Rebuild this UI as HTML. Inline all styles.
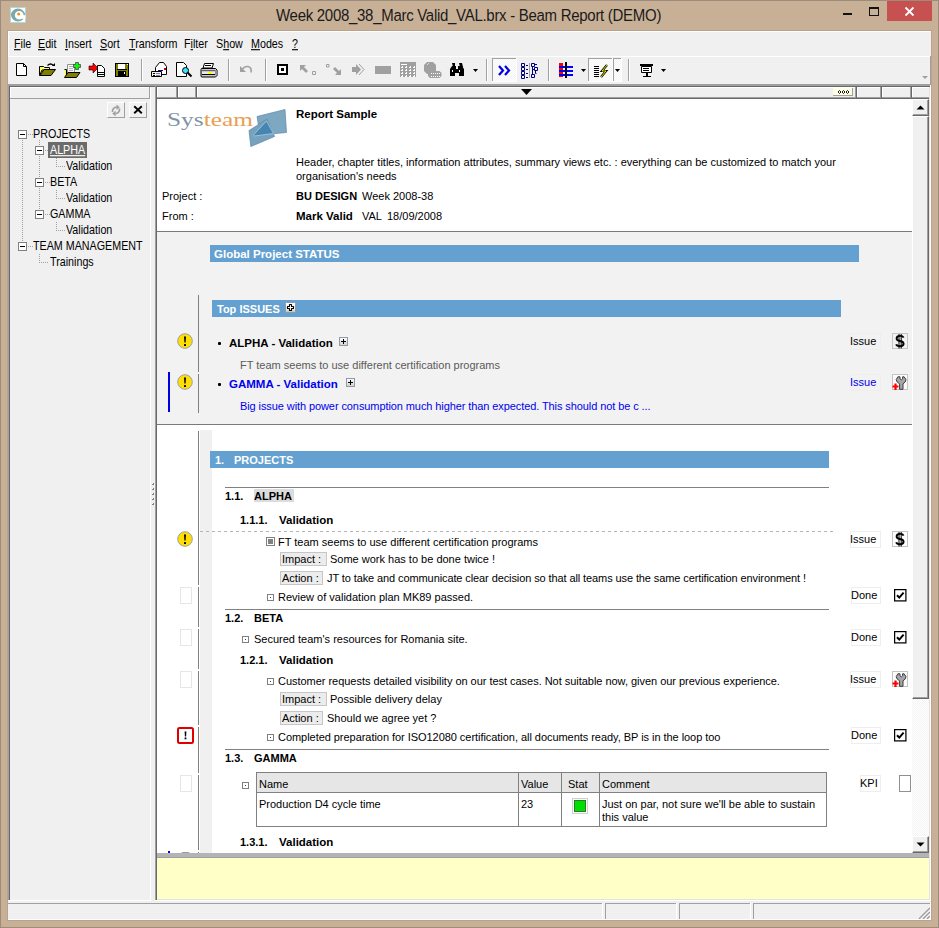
<!DOCTYPE html>
<html><head><meta charset="utf-8">
<style>
*{box-sizing:border-box}
html,body{margin:0;padding:0}
body{width:939px;height:928px;position:relative;overflow:hidden;background:#c8b097;font-family:"Liberation Sans",sans-serif;font-size:11px;color:#000}
.a{position:absolute}
.t{position:absolute;white-space:nowrap;font-size:11px;line-height:11px}
.b{font-weight:bold}
.ms{transform:scale(0.975,1.125);transform-origin:0 9px}
u{text-decoration:underline;text-underline-offset:1px;text-decoration-thickness:1px}
</style></head><body>
<!-- window frame -->
<div class="a" style="left:0;top:0;width:939px;height:1px;background:#9d8c7b"></div>
<div class="a" style="left:0;top:0;width:1px;height:928px;background:#9d8c7b"></div>
<div class="a" style="left:938px;top:0;width:1px;height:928px;background:#9d8c7b"></div>
<div class="a" style="left:0;top:927px;width:939px;height:1px;background:#9d8c7b"></div>

<!-- title -->
<svg id="ticon" class="a" style="left:10px;top:7px" width="16" height="16"><rect x="0.5" y="0.5" width="15" height="15" fill="#fff" stroke="#b8d4d4"/><path fill-rule="evenodd" d="M15 8A7 6.4 0 1 0 1 8A7 6.4 0 1 0 15 8ZM13.6 8.3A4.4 4.2 0 1 0 4.8 8.3A4.4 4.2 0 1 0 13.6 8.3Z" fill="#79a9a9"/><path d="M10.5 8.2H15.5V11.8H10.5Z" fill="#fff"/><circle cx="8.6" cy="7" r="1.5" fill="#f5901e"/></svg>
<div class="t" style="left:276px;top:8px;font-size:15px;line-height:15px;letter-spacing:-0.29px;color:#1a1a1a;transform:scaleY(1.05);transform-origin:0 13px">Week 2008_38_Marc Valid_VAL.brx - Beam Report (DEMO)</div>
<div class="a" style="left:843px;top:13px;width:9px;height:2px;background:#111"></div>
<div class="a" style="left:869px;top:7px;width:10px;height:9px;border:1px solid #111;border-top-width:2px"></div>
<div class="a" style="left:887px;top:1px;width:45px;height:20px;background:#c75050"></div>
<svg class="a" style="left:887px;top:1px" width="45" height="20"><path d="M18.5 6.5l8 8M26.5 6.5l-8 8" stroke="#fff" stroke-width="1.8"/></svg>

<!-- client area -->
<div class="a" style="left:7px;top:30px;width:925px;height:891px;background:#b9a38c"></div>
<div class="a" style="left:8px;top:31px;width:923px;height:889px;background:#f0f0f0"></div>
<div class="a" style="left:8px;top:31px;width:923px;height:1px;background:#fff"></div>
<div class="a" style="left:8px;top:31px;width:1px;height:25px;background:#fff"></div>
<div class="a" style="left:8px;top:56px;width:923px;height:1px;background:#fff"></div>

<!-- menu -->
<div id="menu">
<div class="t ms" style="left:14px;top:39px"><u>F</u>ile</div>
<div class="t ms" style="left:38px;top:39px"><u>E</u>dit</div>
<div class="t ms" style="left:65px;top:39px"><u>I</u>nsert</div>
<div class="t ms" style="left:100px;top:39px"><u>S</u>ort</div>
<div class="t ms" style="left:129px;top:39px"><u>T</u>ransform</div>
<div class="t ms" style="left:184px;top:39px">F<u>i</u>lter</div>
<div class="t ms" style="left:216px;top:39px">S<u>h</u>ow</div>
<div class="t ms" style="left:251px;top:39px"><u>M</u>odes</div>
<div class="t ms" style="left:292px;top:39px"><u>?</u></div>
</div>

<!-- toolbar -->
<div id="toolbar"></div>

<!-- panes -->
<div id="panes">
<div class="a" style="left:930px;top:56px;width:1px;height:29px;background:#a0a0a0;"></div>
<div class="a" style="left:8px;top:84px;width:923px;height:2px;background:#a0a0a0;"></div>
<div class="a" style="left:9px;top:86px;width:921px;height:1px;background:#696969;"></div>
<div class="a" style="left:8px;top:84px;width:1px;height:817px;background:#a0a0a0;"></div>
<div class="a" style="left:9px;top:86px;width:1px;height:814px;background:#696969;"></div>
<div class="a" style="left:150px;top:87px;width:1px;height:814px;background:#ffffff;"></div>
<div class="a" style="left:8px;top:900px;width:143px;height:1px;background:#ffffff;"></div>
<div class="a" style="left:10px;top:87px;width:140px;height:1px;background:#ffffff;"></div>
<div class="a" style="left:10px;top:87px;width:1px;height:11px;background:#ffffff;"></div>
<div class="a" style="left:149px;top:87px;width:1px;height:12px;background:#a0a0a0;"></div>
<div class="a" style="left:10px;top:98px;width:140px;height:1px;background:#a0a0a0;"></div>
<div class="a" style="left:155px;top:84px;width:1px;height:817px;background:#a0a0a0;"></div>
<div class="a" style="left:156px;top:86px;width:1px;height:814px;background:#696969;"></div>
<div class="a" style="left:930px;top:85px;width:1px;height:816px;background:#ffffff;"></div>
<div class="a" style="left:155px;top:900px;width:776px;height:1px;background:#ffffff;"></div>
<div class="a" style="left:157px;top:899px;width:773px;height:1px;background:#e3e3e3;"></div>
<div class="a" style="left:929px;top:87px;width:1px;height:813px;background:#e3e3e3;"></div>
<div class="a" style="left:157px;top:87px;width:21px;height:12px;background:#f0f0f0;"></div>
<div class="a" style="left:157px;top:87px;width:21px;height:1px;background:#ffffff;"></div>
<div class="a" style="left:157px;top:87px;width:1px;height:10px;background:#ffffff;"></div>
<div class="a" style="left:157px;top:97px;width:21px;height:1px;background:#a0a0a0;"></div>
<div class="a" style="left:157px;top:98px;width:21px;height:1px;background:#696969;"></div>
<div class="a" style="left:176px;top:87px;width:1px;height:11px;background:#a0a0a0;"></div>
<div class="a" style="left:177px;top:87px;width:1px;height:12px;background:#696969;"></div>
<div class="a" style="left:178px;top:87px;width:19px;height:12px;background:#f0f0f0;"></div>
<div class="a" style="left:178px;top:87px;width:19px;height:1px;background:#ffffff;"></div>
<div class="a" style="left:178px;top:87px;width:1px;height:10px;background:#ffffff;"></div>
<div class="a" style="left:178px;top:97px;width:19px;height:1px;background:#a0a0a0;"></div>
<div class="a" style="left:178px;top:98px;width:19px;height:1px;background:#696969;"></div>
<div class="a" style="left:195px;top:87px;width:1px;height:11px;background:#a0a0a0;"></div>
<div class="a" style="left:196px;top:87px;width:1px;height:12px;background:#696969;"></div>
<div class="a" style="left:197px;top:87px;width:660px;height:12px;background:#f0f0f0;"></div>
<div class="a" style="left:197px;top:87px;width:660px;height:1px;background:#ffffff;"></div>
<div class="a" style="left:197px;top:87px;width:1px;height:10px;background:#ffffff;"></div>
<div class="a" style="left:197px;top:97px;width:660px;height:1px;background:#a0a0a0;"></div>
<div class="a" style="left:197px;top:98px;width:660px;height:1px;background:#696969;"></div>
<div class="a" style="left:855px;top:87px;width:1px;height:11px;background:#a0a0a0;"></div>
<div class="a" style="left:856px;top:87px;width:1px;height:12px;background:#696969;"></div>
<div class="a" style="left:857px;top:87px;width:25px;height:12px;background:#f0f0f0;"></div>
<div class="a" style="left:857px;top:87px;width:25px;height:1px;background:#ffffff;"></div>
<div class="a" style="left:857px;top:87px;width:1px;height:10px;background:#ffffff;"></div>
<div class="a" style="left:857px;top:97px;width:25px;height:1px;background:#a0a0a0;"></div>
<div class="a" style="left:857px;top:98px;width:25px;height:1px;background:#696969;"></div>
<div class="a" style="left:880px;top:87px;width:1px;height:11px;background:#a0a0a0;"></div>
<div class="a" style="left:881px;top:87px;width:1px;height:12px;background:#696969;"></div>
<div class="a" style="left:882px;top:87px;width:30px;height:12px;background:#f0f0f0;"></div>
<div class="a" style="left:882px;top:87px;width:30px;height:1px;background:#ffffff;"></div>
<div class="a" style="left:882px;top:87px;width:1px;height:10px;background:#ffffff;"></div>
<div class="a" style="left:882px;top:97px;width:30px;height:1px;background:#a0a0a0;"></div>
<div class="a" style="left:882px;top:98px;width:30px;height:1px;background:#696969;"></div>
<div class="a" style="left:910px;top:87px;width:1px;height:11px;background:#a0a0a0;"></div>
<div class="a" style="left:911px;top:87px;width:1px;height:12px;background:#696969;"></div>
<div class="a" style="left:912px;top:87px;width:17px;height:12px;background:#f0f0f0;"></div>
<div class="a" style="left:912px;top:87px;width:17px;height:1px;background:#ffffff;"></div>
<div class="a" style="left:912px;top:87px;width:1px;height:10px;background:#ffffff;"></div>
<div class="a" style="left:912px;top:97px;width:17px;height:1px;background:#a0a0a0;"></div>
<div class="a" style="left:912px;top:98px;width:17px;height:1px;background:#696969;"></div>
<div class="a" style="left:157px;top:99px;width:755px;height:754px;background:#ffffff;"></div>
<div class="a" style="left:912px;top:99px;width:17px;height:754px;background:#f0f0f0;"></div>
<div class="a" style="left:157px;top:853px;width:772px;height:5px;background:#b4b4b4;"></div>
<div class="a" style="left:157px;top:858px;width:772px;height:41px;background:#ffffc8;"></div>
<div class="a" style="left:8px;top:903px;width:595px;height:1px;background:#a0a0a0;"></div>
<div class="a" style="left:602px;top:903px;width:1px;height:16px;background:#ffffff;"></div>
<div class="a" style="left:605px;top:903px;width:72px;height:1px;background:#a0a0a0;"></div>
<div class="a" style="left:605px;top:903px;width:1px;height:16px;background:#a0a0a0;"></div>
<div class="a" style="left:676px;top:903px;width:1px;height:16px;background:#ffffff;"></div>
<div class="a" style="left:679px;top:903px;width:72px;height:1px;background:#a0a0a0;"></div>
<div class="a" style="left:679px;top:903px;width:1px;height:16px;background:#a0a0a0;"></div>
<div class="a" style="left:750px;top:903px;width:1px;height:16px;background:#ffffff;"></div>
<div class="a" style="left:753px;top:903px;width:178px;height:1px;background:#a0a0a0;"></div>
<div class="a" style="left:753px;top:903px;width:1px;height:16px;background:#a0a0a0;"></div>
<div class="a" style="left:930px;top:903px;width:1px;height:16px;background:#ffffff;"></div>
</div>

<!--R-->
<svg class="a" style="left:160px;top:104px" width="132" height="46"><text x="7" y="21.5" font-family="Liberation Serif" font-size="18.5" fill="#8393a6" textLength="86" lengthAdjust="spacingAndGlyphs">Sys<tspan fill="#eaa052">team</tspan></text><path d="M97 12.5 L125 5.5 L126.5 28.5 L100 31 Z" fill="#7ea7c2" stroke="#5e88a6" stroke-width="0.7"/><path d="M89 26.6 L107 15 L114.6 32.4 L90.8 42.6 Z" fill="#76a2c0" stroke="#5e88a6" stroke-width="0.7"/><path d="M93.5 31 L106.5 17 L113.5 29.5 L94.5 32 Z" fill="#4585b0" stroke="#a8cce0" stroke-width="0.8"/></svg>
<div class="t" style="left:296px;top:109px;font-weight:bold;font-size:11.5px">Report Sample</div>
<div class="t" style="left:296px;top:157px;">Header, chapter titles, information attributes, summary views etc. : everything can be customized to match your</div>
<div class="t" style="left:296px;top:171px;">organisation's needs</div>
<div class="t" style="left:162px;top:191px;">Project :</div>
<div class="t" style="left:296px;top:191px;font-weight:bold;">BU DESIGN</div>
<div class="t" style="left:362px;top:191px;">Week 2008-38</div>
<div class="t" style="left:162px;top:211px;">From :</div>
<div class="t" style="left:296px;top:211px;font-weight:bold;font-size:11.5px">Mark Valid</div>
<div class="t" style="left:362px;top:211px;">VAL</div>
<div class="t" style="left:387px;top:211px;">18/09/2008</div>
<div class="a" style="left:157px;top:231px;width:755px;height:1px;background:#7a7a7a;"></div>
<div class="a" style="left:157px;top:232px;width:755px;height:192px;background:#f2f2f2;"></div>
<div class="a" style="left:157px;top:424px;width:755px;height:1px;background:#7a7a7a;"></div>
<div class="a" style="left:210px;top:245px;width:649px;height:17px;background:#65a1d0;"></div>
<div class="t" style="left:214px;top:249px;font-weight:bold;color:#fff;font-size:11.5px">Global Project STATUS</div>
<div class="a" style="left:212px;top:300px;width:629px;height:17px;background:#65a1d0;"></div>
<div class="t" style="left:217px;top:304px;font-weight:bold;color:#fff">Top ISSUES</div>
<svg class="a" style="left:285px;top:302px" width="11" height="11"><defs><linearGradient id="tg" x1="0" y1="0" x2="0" y2="1"><stop offset="0" stop-color="#fff"/><stop offset="0.6" stop-color="#f4f2ec"/><stop offset="1" stop-color="#c8bca4"/></linearGradient></defs><rect x="0.5" y="0.5" width="10" height="10" rx="1" fill="url(#tg)" stroke="#8a9cb2" stroke-width="1"/><path d="M4.5 2.5h2v2h2v2h-2v2h-2v-2h-2v-2h2z" fill="#fff" stroke="#000" stroke-width="1.1" stroke-linejoin="round"/></svg>
<div class="a" style="left:198px;top:295px;width:1px;height:77px;background:#808080;"></div>
<div class="a" style="left:198px;top:374px;width:1px;height:39px;background:#808080;"></div>
<svg class="a" style="left:177px;top:333px" width="16" height="16"><circle cx="8" cy="8" r="7.3" fill="#ffde00" stroke="#9aa0b0" stroke-width="1"/><path d="M7 3.5h2l-.4 6h-1.2z" fill="#000"/><rect x="7" y="11" width="2" height="2" rx="0.5" fill="#000"/></svg>
<div class="a" style="left:218px;top:342px;width:3px;height:3px;background:#000;border-radius:1px"></div>
<div class="t" style="left:229px;top:338px;font-weight:bold;font-size:11.5px">ALPHA - Validation</div>
<svg class="a" style="left:339px;top:337px" width="9" height="9" shape-rendering="crispEdges"><defs><linearGradient id="pg" x1="0" y1="0" x2="0" y2="1"><stop offset="0" stop-color="#ffffff"/><stop offset="1" stop-color="#d8d0c0"/></linearGradient></defs><rect x="0.5" y="0.5" width="8" height="8" fill="url(#pg)" stroke="#8c9cb0"/><rect x="2" y="4" width="5" height="1" fill="#000"/><rect x="4" y="2" width="1" height="5" fill="#000"/></svg>
<div class="t" style="left:240px;top:360px;color:#5a5a5a">FT team seems to use different certification programs</div>
<div class="a" style="left:850px;top:333px;width:31px;height:17px;border:1px solid #eeeeee"></div>
<div class="t" style="left:850px;top:336px;color:#000">Issue</div>
<div class="a" style="left:892px;top:333px;width:16px;height:16px;border:1px solid #c4c4c4"></div>
<svg class="a" style="left:892px;top:333px" width="16" height="16"><path d="M11.6 4.6 C11 3.2 9.6 2.9 8 2.9 C5.8 2.9 4.6 3.9 4.6 5.4 C4.6 7 6 7.6 8 8 C10.2 8.4 11.6 9 11.6 10.8 C11.6 12.4 10.2 13.2 8 13.2 C6 13.2 4.6 12.6 4.2 11.2" stroke="#000" stroke-width="1.9" fill="none"/><path d="M7 1v14.5M9.2 1v14.5" stroke="#000" stroke-width="1"/></svg>
<div class="a" style="left:168px;top:372px;width:2px;height:40px;background:#0000e0;"></div>
<svg class="a" style="left:177px;top:374px" width="16" height="16"><circle cx="8" cy="8" r="7.3" fill="#ffde00" stroke="#9aa0b0" stroke-width="1"/><path d="M7 3.5h2l-.4 6h-1.2z" fill="#000"/><rect x="7" y="11" width="2" height="2" rx="0.5" fill="#000"/></svg>
<div class="a" style="left:218px;top:383px;width:3px;height:3px;background:#000;border-radius:1px"></div>
<div class="t" style="left:229px;top:379px;font-weight:bold;font-size:11.5px;color:#0000ee">GAMMA - Validation</div>
<svg class="a" style="left:346px;top:378px" width="9" height="9" shape-rendering="crispEdges"><defs><linearGradient id="pg" x1="0" y1="0" x2="0" y2="1"><stop offset="0" stop-color="#ffffff"/><stop offset="1" stop-color="#d8d0c0"/></linearGradient></defs><rect x="0.5" y="0.5" width="8" height="8" fill="url(#pg)" stroke="#8c9cb0"/><rect x="2" y="4" width="5" height="1" fill="#000"/><rect x="4" y="2" width="1" height="5" fill="#000"/></svg>
<div class="t" style="left:240px;top:401px;color:#0000ee;letter-spacing:-0.09px">Big issue with power consumption much higher than expected. This should not be c ...</div>
<div class="a" style="left:850px;top:374px;width:31px;height:17px;border:1px solid #eeeeee"></div>
<div class="t" style="left:850px;top:377px;color:#0000ee">Issue</div>
<div class="a" style="left:892px;top:374px;width:16px;height:16px;border:1px solid #c4c4c4;background:#fcfcfc"></div>
<svg class="a" style="left:892px;top:374px" width="16" height="16"><path d="M5.9 2.8 L8 2.8 L8 4.8 Q9.3 6.8 10.6 4.8 L10.6 2.8 L12.1 2.8 L14 5.6 L13.2 8 L11 9.8 L11 15.3 L7.6 15.3 L7.6 9.8 L5.2 8 L4.2 5.6 Z" fill="#a4a6a8" stroke="#3c3c3c" stroke-width="1"/><path d="M0.5 12.5h6M3.5 9.5v6.5" stroke="#ff0000" stroke-width="2.2"/></svg>
<div class="a" style="left:200px;top:430px;width:12px;height:423px;background:#f0f0f0;"></div>
<div class="a" style="left:198px;top:431px;width:1px;height:154px;background:#808080;"></div>
<div class="a" style="left:198px;top:587px;width:1px;height:40px;background:#808080;"></div>
<div class="a" style="left:198px;top:629px;width:1px;height:40px;background:#808080;"></div>
<div class="a" style="left:198px;top:671px;width:1px;height:54px;background:#808080;"></div>
<div class="a" style="left:198px;top:727px;width:1px;height:46px;background:#808080;"></div>
<div class="a" style="left:198px;top:775px;width:1px;height:75px;background:#808080;"></div>
<div class="a" style="left:198px;top:852px;width:1px;height:1px;background:#808080;"></div>
<div class="a" style="left:210px;top:451px;width:619px;height:17px;background:#65a1d0;"></div>
<div class="t" style="left:215px;top:455px;font-weight:bold;color:#fff">1.</div>
<div class="t" style="left:234px;top:455px;font-weight:bold;color:#fff">PROJECTS</div>
<div class="a" style="left:225px;top:487px;width:604px;height:1px;background:#808080;"></div>
<div class="t" style="left:225px;top:491px;font-weight:bold;">1.1.</div>
<div class="a" style="left:254px;top:489px;width:40px;height:13px;background:#dcdcdc;"></div>
<div class="t" style="left:254px;top:491px;font-weight:bold;">ALPHA</div>
<div class="t" style="left:240px;top:515px;font-weight:bold;">1.1.1.</div>
<div class="t" style="left:279px;top:515px;font-weight:bold;font-size:11.5px">Validation</div>
<div class="a" style="left:200px;top:531px;width:634px;height:1px;background:repeating-linear-gradient(90deg,#b4b4b4 0 3px,transparent 3px 6px)"></div>
<svg class="a" style="left:177px;top:531px" width="16" height="16"><circle cx="8" cy="8" r="7.3" fill="#ffde00" stroke="#9aa0b0" stroke-width="1"/><path d="M7 3.5h2l-.4 6h-1.2z" fill="#000"/><rect x="7" y="11" width="2" height="2" rx="0.5" fill="#000"/></svg>
<svg class="a" style="left:266px;top:537px" width="9" height="9" shape-rendering="crispEdges"><rect x="0.5" y="0.5" width="8" height="8" fill="#fff" stroke="#808080"/><rect x="2" y="2" width="5" height="5" fill="#808080"/></svg>
<div class="t" style="left:278px;top:537px;">FT team seems to use different certification programs</div>
<div class="a" style="left:850px;top:531px;width:31px;height:17px;border:1px solid #eeeeee"></div>
<div class="t" style="left:850px;top:534px;color:#000">Issue</div>
<div class="a" style="left:892px;top:531px;width:16px;height:16px;border:1px solid #c4c4c4"></div>
<svg class="a" style="left:892px;top:531px" width="16" height="16"><path d="M11.6 4.6 C11 3.2 9.6 2.9 8 2.9 C5.8 2.9 4.6 3.9 4.6 5.4 C4.6 7 6 7.6 8 8 C10.2 8.4 11.6 9 11.6 10.8 C11.6 12.4 10.2 13.2 8 13.2 C6 13.2 4.6 12.6 4.2 11.2" stroke="#000" stroke-width="1.9" fill="none"/><path d="M7 1v14.5M9.2 1v14.5" stroke="#000" stroke-width="1"/></svg>
<div class="a" style="left:280px;top:552px;width:47px;height:14px;background:#ececec;border:1px solid #c6c6c6"></div>
<div class="t" style="left:282px;top:554px;">Impact :</div>
<div class="t" style="left:330px;top:554px;">Some work has to be done twice !</div>
<div class="a" style="left:280px;top:571px;width:43px;height:14px;background:#ececec;border:1px solid #c6c6c6"></div>
<div class="t" style="left:282px;top:573px;">Action :</div>
<div class="t" style="left:327px;top:573px;letter-spacing:-0.1px">JT to take and communicate clear decision so that all teams use the same certification environment !</div>
<div class="a" style="left:180px;top:587px;width:12px;height:17px;border:1px solid #e6e6e6"></div>
<svg class="a" style="left:267px;top:594px" width="7" height="7" shape-rendering="crispEdges"><rect x="0.5" y="0.5" width="6" height="6" fill="#fff" stroke="#808080"/><rect x="3" y="3" width="1" height="1" fill="#404040"/></svg>
<div class="t" style="left:278px;top:592px;">Review of validation plan MK89 passed.</div>
<div class="a" style="left:851px;top:587px;width:30px;height:17px;border:1px solid #eeeeee"></div>
<div class="t" style="left:851px;top:590px;color:#000">Done</div>
<svg class="a" style="left:894px;top:589px" width="13" height="13"><rect x="0.6" y="0.6" width="11.3" height="11.3" fill="#fff" stroke="#000" stroke-width="1.25"/><path d="M3 6.2 L5.3 8.6 L9.6 3.6" stroke="#000" stroke-width="2" fill="none"/></svg>
<div class="a" style="left:225px;top:609px;width:604px;height:1px;background:#808080;"></div>
<div class="t" style="left:225px;top:613px;font-weight:bold;">1.2.</div>
<div class="t" style="left:254px;top:613px;font-weight:bold;">BETA</div>
<div class="a" style="left:180px;top:629px;width:12px;height:17px;border:1px solid #e6e6e6"></div>
<svg class="a" style="left:242px;top:636px" width="7" height="7" shape-rendering="crispEdges"><rect x="0.5" y="0.5" width="6" height="6" fill="#fff" stroke="#808080"/><rect x="3" y="3" width="1" height="1" fill="#404040"/></svg>
<div class="t" style="left:254px;top:634px;">Secured team's resources for Romania site.</div>
<div class="a" style="left:851px;top:629px;width:30px;height:17px;border:1px solid #eeeeee"></div>
<div class="t" style="left:851px;top:632px;color:#000">Done</div>
<svg class="a" style="left:894px;top:631px" width="13" height="13"><rect x="0.6" y="0.6" width="11.3" height="11.3" fill="#fff" stroke="#000" stroke-width="1.25"/><path d="M3 6.2 L5.3 8.6 L9.6 3.6" stroke="#000" stroke-width="2" fill="none"/></svg>
<div class="t" style="left:240px;top:655px;font-weight:bold;">1.2.1.</div>
<div class="t" style="left:279px;top:655px;font-weight:bold;font-size:11.5px">Validation</div>
<div class="a" style="left:180px;top:671px;width:12px;height:17px;border:1px solid #e6e6e6"></div>
<svg class="a" style="left:267px;top:678px" width="7" height="7" shape-rendering="crispEdges"><rect x="0.5" y="0.5" width="6" height="6" fill="#fff" stroke="#808080"/><rect x="3" y="3" width="1" height="1" fill="#404040"/></svg>
<div class="t" style="left:278px;top:676px;letter-spacing:-0.03px">Customer requests detailed visibility on our test cases. Not suitable now, given our previous experience.</div>
<div class="a" style="left:850px;top:671px;width:31px;height:17px;border:1px solid #eeeeee"></div>
<div class="t" style="left:850px;top:674px;color:#000">Issue</div>
<div class="a" style="left:892px;top:671px;width:16px;height:16px;border:1px solid #c4c4c4;background:#fcfcfc"></div>
<svg class="a" style="left:892px;top:671px" width="16" height="16"><path d="M5.9 2.8 L8 2.8 L8 4.8 Q9.3 6.8 10.6 4.8 L10.6 2.8 L12.1 2.8 L14 5.6 L13.2 8 L11 9.8 L11 15.3 L7.6 15.3 L7.6 9.8 L5.2 8 L4.2 5.6 Z" fill="#a4a6a8" stroke="#3c3c3c" stroke-width="1"/><path d="M0.5 12.5h6M3.5 9.5v6.5" stroke="#ff0000" stroke-width="2.2"/></svg>
<div class="a" style="left:280px;top:692px;width:47px;height:14px;background:#ececec;border:1px solid #c6c6c6"></div>
<div class="t" style="left:282px;top:694px;">Impact :</div>
<div class="t" style="left:330px;top:694px;">Possible delivery delay</div>
<div class="a" style="left:280px;top:711px;width:43px;height:14px;background:#ececec;border:1px solid #c6c6c6"></div>
<div class="t" style="left:282px;top:713px;">Action :</div>
<div class="t" style="left:327px;top:713px;">Should we agree yet ?</div>
<svg class="a" style="left:177px;top:727px" width="17" height="17"><rect x="1" y="1" width="15" height="15" rx="1.5" fill="#fff" stroke="#e00000" stroke-width="2"/><path d="M7.6 4.5h1.8l-.3 5h-1.2z" fill="#000"/><rect x="7.6" y="10.5" width="1.8" height="1.8" fill="#000"/></svg>
<svg class="a" style="left:267px;top:734px" width="7" height="7" shape-rendering="crispEdges"><rect x="0.5" y="0.5" width="6" height="6" fill="#fff" stroke="#808080"/><rect x="3" y="3" width="1" height="1" fill="#404040"/></svg>
<div class="t" style="left:278px;top:732px;letter-spacing:-0.045px">Completed preparation for ISO12080 certification, all documents ready, BP is in the loop too</div>
<div class="a" style="left:851px;top:727px;width:30px;height:17px;border:1px solid #eeeeee"></div>
<div class="t" style="left:851px;top:730px;color:#000">Done</div>
<svg class="a" style="left:894px;top:729px" width="13" height="13"><rect x="0.6" y="0.6" width="11.3" height="11.3" fill="#fff" stroke="#000" stroke-width="1.25"/><path d="M3 6.2 L5.3 8.6 L9.6 3.6" stroke="#000" stroke-width="2" fill="none"/></svg>
<div class="a" style="left:225px;top:749px;width:604px;height:1px;background:#808080;"></div>
<div class="t" style="left:225px;top:753px;font-weight:bold;">1.3.</div>
<div class="t" style="left:254px;top:753px;font-weight:bold;">GAMMA</div>
<div class="a" style="left:180px;top:775px;width:12px;height:17px;border:1px solid #e6e6e6"></div>
<svg class="a" style="left:242px;top:782px" width="7" height="7" shape-rendering="crispEdges"><rect x="0.5" y="0.5" width="6" height="6" fill="#fff" stroke="#808080"/><rect x="3" y="3" width="1" height="1" fill="#404040"/></svg>
<div class="a" style="left:256px;top:772px;width:571px;height:55px;border:1px solid #808080;background:#fff"></div>
<div class="a" style="left:257px;top:773px;width:569px;height:19px;background:#e6e6e6;"></div>
<div class="a" style="left:257px;top:792px;width:569px;height:1px;background:#808080;"></div>
<div class="a" style="left:518px;top:773px;width:1px;height:53px;background:#808080;"></div>
<div class="a" style="left:561px;top:773px;width:1px;height:53px;background:#808080;"></div>
<div class="a" style="left:599px;top:773px;width:1px;height:53px;background:#808080;"></div>
<div class="t" style="left:259px;top:779px;">Name</div>
<div class="t" style="left:521px;top:779px;">Value</div>
<div class="t" style="left:568px;top:779px;">Stat</div>
<div class="t" style="left:602px;top:779px;">Comment</div>
<div class="t" style="left:259px;top:799px;">Production D4 cycle time</div>
<div class="t" style="left:521px;top:799px;">23</div>
<div class="a" style="left:572px;top:798px;width:16px;height:16px;border:1px solid #d0d0d0;background:#fff"></div>
<div class="a" style="left:574px;top:800px;width:12px;height:12px;border:1px solid #2a7a2a;background:#00e000"></div>
<div class="t" style="left:602px;top:799px;">Just on par, not sure we'll be able to sustain</div>
<div class="t" style="left:602px;top:812px;">this value</div>
<div class="a" style="left:860px;top:775px;width:21px;height:17px;border:1px solid #eeeeee"></div>
<div class="t" style="left:860px;top:778px;color:#000">KPI</div>
<div class="a" style="left:899px;top:775px;width:12px;height:17px;border:1px solid #909090;background:#fff"></div>
<div class="t" style="left:240px;top:837px;font-weight:bold;">1.3.1.</div>
<div class="t" style="left:279px;top:837px;font-weight:bold;font-size:11.5px">Validation</div>
<div class="a" style="left:168px;top:851px;width:2px;height:2px;background:#0000e0;"></div>
<svg class="a" style="left:520px;top:88px" width="13" height="8"><path d="M1 1h11l-5.5 6z" fill="#000"/></svg>
<div class="a" style="left:833px;top:88px;width:20px;height:8px;background:#ffffe1;border-right:1px solid #a0a0a0;border-bottom:1px solid #a0a0a0"></div>
<svg class="a" style="left:833px;top:88px" width="20" height="8"><path d="M6.5 2.5l1.5 1.5-1.5 1.5-1.5-1.5z M10.5 2.5l1.5 1.5-1.5 1.5-1.5-1.5z M14.5 2.5l1.5 1.5-1.5 1.5-1.5-1.5z" fill="#fff" stroke="#000" stroke-width="0.9"/></svg>
<div class="a" style="left:912px;top:99px;width:17px;height:17px;background:#f0f0f0;border:1px solid;border-color:#fff #696969 #696969 #fff;box-shadow:inset -1px -1px #a0a0a0"></div>
<svg class="a" style="left:912px;top:99px" width="17" height="17"><path d="M4.5 10.5h8l-4-4z" fill="#000"/></svg>
<div class="a" style="left:912px;top:116px;width:17px;height:583px;background:#f0f0f0;border:1px solid;border-color:#fff #696969 #696969 #fff;box-shadow:inset -1px -1px #a0a0a0"></div>
<div class="a" style="left:912px;top:699px;width:17px;height:137px;background:repeating-conic-gradient(#f4f4f4 0 25%,#ffffff 0 50%) 0 0/2px 2px"></div>
<div class="a" style="left:912px;top:836px;width:17px;height:17px;background:#f0f0f0;border:1px solid;border-color:#fff #696969 #696969 #fff;box-shadow:inset -1px -1px #a0a0a0"></div>
<svg class="a" style="left:912px;top:836px" width="17" height="17"><path d="M4.5 6.5h8l-4 4z" fill="#000"/></svg>
<svg class="a" style="left:915px;top:904px" width="16" height="16"><path d="M4 15L15 4M8 15L15 8M12 15L15 12" stroke="#a0a0a0" stroke-width="1.6"/><path d="M5.2 15.5L15.5 5.2M9.2 15.5L15.5 9.2M13.2 15.5L15.5 13.2" stroke="#fff" stroke-width="0.8"/></svg>
<div class="a" style="left:930px;top:903px;width:1px;height:17px;background:#fff;"></div>
<div class="a" style="left:8px;top:919px;width:923px;height:1px;background:#fff;"></div>
<div class="a" style="left:182px;top:852px;width:7px;height:1px;background:#9a9a9a;border-radius:1px"></div>
<div class="a" style="left:181px;top:852px;width:1px;height:1px;background:#e0e0e0;"></div>
<div class="a" style="left:189px;top:852px;width:1px;height:1px;background:#e0e0e0;"></div>
<div class="a" style="left:152px;top:483px;width:1px;height:1px;background:#ffffff;"></div>
<div class="a" style="left:153px;top:483px;width:1px;height:2px;background:#808080;"></div>
<div class="a" style="left:152px;top:484px;width:1px;height:1px;background:#808080;"></div>
<div class="a" style="left:152px;top:488px;width:1px;height:1px;background:#ffffff;"></div>
<div class="a" style="left:153px;top:488px;width:1px;height:2px;background:#808080;"></div>
<div class="a" style="left:152px;top:489px;width:1px;height:1px;background:#808080;"></div>
<div class="a" style="left:152px;top:493px;width:1px;height:1px;background:#ffffff;"></div>
<div class="a" style="left:153px;top:493px;width:1px;height:2px;background:#808080;"></div>
<div class="a" style="left:152px;top:494px;width:1px;height:1px;background:#808080;"></div>
<div class="a" style="left:152px;top:498px;width:1px;height:1px;background:#ffffff;"></div>
<div class="a" style="left:153px;top:498px;width:1px;height:2px;background:#808080;"></div>
<div class="a" style="left:152px;top:499px;width:1px;height:1px;background:#808080;"></div>
<div class="a" style="left:152px;top:503px;width:1px;height:1px;background:#ffffff;"></div>
<div class="a" style="left:153px;top:503px;width:1px;height:2px;background:#808080;"></div>
<div class="a" style="left:152px;top:504px;width:1px;height:1px;background:#808080;"></div>
<div class="a" style="left:157px;top:857px;width:772px;height:1px;background:#a0a0a0;"></div>
<!--/R-->
<!--TB-->
<svg class="a" style="left:0;top:0" width="939" height="90"><path d="M16.5 63.5H23.5L26.5 66.5V75.5H16.5Z" fill="#fff" stroke="#000" stroke-width="1" /><path d="M23.5 63.5V66.5H26.5" fill="none" stroke="#000" stroke-width="1" /><path d="M39.5 66.5h4l1 1h5v2.5h-7.5l-2.5 5.5z" fill="#ffff60" stroke="#000" stroke-width="1" /><path d="M40 75.5l4-6h11.5l-4.5 6z" fill="#808000" stroke="#000" stroke-width="1" /><path d="M47.5 65.5q3-3 6 0" fill="none" stroke="#000" stroke-width="1.2" /><path d="M52 66h3v-3z" fill="#000" stroke="none" stroke-width="1" /><path d="M67.5 64.5h7v9h-7z" fill="#f8f8f8" stroke="#909090" stroke-width="1" /><rect x="69" y="66" width="4" height="1" fill="#b0b0b0"/><rect x="69" y="68" width="4" height="1" fill="#b0b0b0"/><rect x="69" y="70" width="4" height="1" fill="#b0b0b0"/><path d="M64.5 69.5h2v6.5" fill="none" stroke="#000" stroke-width="1" /><rect x="65" y="70" width="1" height="6" fill="#ffff00"/><path d="M64.5 77.5l3.5-5h12l-3.5 5z" fill="#808000" stroke="#000" stroke-width="1" /><path d="M75.5 62.5h3v2h2v3h-2v2h-3v-2h-2v-3h2z" fill="#00ff00" stroke="#500050" stroke-width="0.6" /><path d="M97.5 65.5h4l3 3v8h-7z" fill="#fff" stroke="#000" stroke-width="1" /><rect x="98" y="72" width="6" height="1" fill="#000"/><rect x="98" y="74" width="6" height="1" fill="#000"/><path d="M89 66h4v-3l5 5-5 5v-3h-4z" fill="#ff0000" stroke="#000" stroke-width="0.6" /><rect x="115" y="63" width="14" height="14" fill="#000"/><rect x="116" y="64" width="12" height="12" fill="#808000"/><rect x="118" y="64" width="7" height="5" fill="#fff"/><rect x="117" y="69" width="10" height="1" fill="#000"/><rect x="118" y="71" width="8" height="5" fill="#000"/><rect x="124" y="72" width="1" height="2" fill="#fff"/><rect x="127" y="64" width="1" height="1" fill="#fff"/><rect x="141" y="59" width="1" height="22" fill="#a0a0a0"/><rect x="142" y="59" width="1" height="22" fill="#ffffff"/><path d="M155.5 67.5l4-5h4l3 4v8h-11z" fill="#fff" stroke="#000" stroke-width="1" /><rect x="158" y="70" width="5" height="1" fill="#0000c0"/><rect x="164" y="68" width="2" height="2" fill="#c00000"/><path d="M151.5 71.5h10v5h-10z" fill="#f0f0f0" stroke="#000" stroke-width="1" /><rect x="153" y="73" width="2" height="1" fill="#000"/><rect x="156" y="73" width="4" height="1" fill="#808080"/><rect x="153" y="75" width="2" height="1" fill="#000"/><rect x="156" y="75" width="4" height="1" fill="#808080"/><path d="M176.5 62.5h7l3 3v11h-10z" fill="#fff" stroke="#000" stroke-width="1" /><circle cx="185.5" cy="70.5" r="3" fill="#40e0ff" stroke="#000" stroke-width="1"/><path d="M187.5 72.5l4 4" fill="none" stroke="#000" stroke-width="2" /><path d="M204.5 63.5h9l-1.5 4.5h-9z" fill="#fff" stroke="#000" stroke-width="1" /><rect x="205" y="65" width="6" height="1" fill="#000"/><rect x="205" y="67" width="5" height="1" fill="#808080"/><path d="M201.5 68.5h14l1.5 1.5v5.5l-1.5 1.5h-14l-.5-1v-6.5z" fill="#c8c8c8" stroke="#000" stroke-width="1" /><rect x="202" y="70" width="14" height="1" fill="#606060"/><rect x="202" y="72" width="14" height="2" fill="#e8e8e8"/><rect x="208" y="72" width="4" height="2" fill="#ffff00"/><rect x="202" y="74" width="14" height="1" fill="#000"/><rect x="215" y="70" width="2" height="5" fill="#909090"/><rect x="228" y="59" width="1" height="22" fill="#a0a0a0"/><rect x="229" y="59" width="1" height="22" fill="#ffffff"/><path d="M242 70q2-4 6-3.5q4 1 3 6" fill="none" stroke="#a0a0a0" stroke-width="1.6" /><path d="M240 66v6h6z" fill="#a0a0a0" stroke="none" stroke-width="1" /><rect x="265" y="59" width="1" height="22" fill="#a0a0a0"/><rect x="266" y="59" width="1" height="22" fill="#ffffff"/><rect x="277" y="64" width="11" height="11" fill="#000"/><rect x="279" y="66" width="7" height="7" fill="#fff"/><rect x="281" y="68" width="3" height="3" fill="#000"/><path d="M300 65h6l-2 2 4 4-2 2-4-4-2 2z" fill="#a0a0a0" stroke="none" stroke-width="1" /><path d="M312.5 71.5h3v3h-3z" fill="none" stroke="#a0a0a0" stroke-width="1" /><path d="M326.5 64.5h2.5v2.5h-2.5z" fill="none" stroke="#a0a0a0" stroke-width="1" /><path d="M341 75h-6l2-2-4-4 2-2 4 4 2-2z" fill="#a0a0a0" stroke="none" stroke-width="1" /><path d="M352 67h4v-3l5 5.5-5 5.5v-3h-4z" fill="#a0a0a0" stroke="none" stroke-width="1" /><path d="M359 64l5 5.5-5 5.5" fill="none" stroke="#a0a0a0" stroke-width="1" /><rect x="375" y="66" width="16" height="8" fill="#a0a0a0"/><rect x="400" y="62" width="16" height="15" fill="#a0a0a0"/><rect x="401" y="64" width="6" height="1" fill="#fff"/><rect x="402" y="66" width="1" height="1" fill="#fff"/><rect x="401" y="67" width="2" height="1" fill="#fff"/><rect x="406" y="66" width="1" height="1" fill="#fff"/><rect x="405" y="67" width="2" height="1" fill="#fff"/><rect x="410" y="66" width="1" height="1" fill="#fff"/><rect x="409" y="67" width="2" height="1" fill="#fff"/><rect x="414" y="66" width="1" height="1" fill="#fff"/><rect x="413" y="67" width="2" height="1" fill="#fff"/><rect x="402" y="69" width="1" height="1" fill="#fff"/><rect x="401" y="70" width="2" height="1" fill="#fff"/><rect x="406" y="69" width="1" height="1" fill="#fff"/><rect x="405" y="70" width="2" height="1" fill="#fff"/><rect x="410" y="69" width="1" height="1" fill="#fff"/><rect x="409" y="70" width="2" height="1" fill="#fff"/><rect x="414" y="69" width="1" height="1" fill="#fff"/><rect x="413" y="70" width="2" height="1" fill="#fff"/><rect x="402" y="72" width="1" height="1" fill="#fff"/><rect x="401" y="73" width="2" height="1" fill="#fff"/><rect x="406" y="72" width="1" height="1" fill="#fff"/><rect x="405" y="73" width="2" height="1" fill="#fff"/><rect x="410" y="72" width="1" height="1" fill="#fff"/><rect x="409" y="73" width="2" height="1" fill="#fff"/><rect x="414" y="72" width="1" height="1" fill="#fff"/><rect x="413" y="73" width="2" height="1" fill="#fff"/><rect x="402" y="75" width="1" height="1" fill="#fff"/><rect x="401" y="76" width="2" height="1" fill="#fff"/><rect x="406" y="75" width="1" height="1" fill="#fff"/><rect x="405" y="76" width="2" height="1" fill="#fff"/><rect x="410" y="75" width="1" height="1" fill="#fff"/><rect x="409" y="76" width="2" height="1" fill="#fff"/><rect x="414" y="75" width="1" height="1" fill="#fff"/><rect x="413" y="76" width="2" height="1" fill="#fff"/><path d="M427 62h6l3 3v6l-3 3h-6l-3-3v-6z" fill="#a0a0a0" stroke="none" stroke-width="1" /><rect x="427" y="64" width="1" height="1" fill="#d8d8d8"/><rect x="428" y="63" width="1" height="1" fill="#d8d8d8"/><path d="M430 71h9.5l2 2v3l-2 2h-9.5l-2-2v-3z" fill="#a0a0a0" stroke="none" stroke-width="1" /><rect x="431" y="73" width="1" height="1" fill="#fff"/><rect x="431" y="76" width="1" height="1" fill="#fff"/><rect x="433" y="73" width="1" height="1" fill="#fff"/><rect x="433" y="76" width="1" height="1" fill="#fff"/><rect x="435" y="73" width="1" height="1" fill="#fff"/><rect x="435" y="76" width="1" height="1" fill="#fff"/><rect x="437" y="73" width="1" height="1" fill="#fff"/><rect x="437" y="76" width="1" height="1" fill="#fff"/><rect x="439" y="73" width="1" height="1" fill="#fff"/><rect x="439" y="76" width="1" height="1" fill="#fff"/><path d="M452 63h3v3h1v3h-1v-2h-2zM459 63h3l1 4h-3z" fill="#000" stroke="none" stroke-width="1" /><path d="M450 69l2-3h4v3h2v-3h4l2 3v7h-5v-3h-4v3h-5z" fill="#000" stroke="none" stroke-width="1" /><rect x="452" y="70" width="1" height="2" fill="#fff"/><rect x="459" y="70" width="1" height="2" fill="#fff"/><path d="M473 69h5l-2.5 3z" fill="#000" stroke="none" stroke-width="1" /><rect x="486" y="59" width="1" height="22" fill="#a0a0a0"/><rect x="487" y="59" width="1" height="22" fill="#ffffff"/><defs><pattern id="dith" width="2" height="2" patternUnits="userSpaceOnUse"><rect width="2" height="2" fill="#f4f4f4"/><rect width="1" height="1" fill="#fff"/><rect x="1" y="1" width="1" height="1" fill="#fff"/></pattern></defs><rect x="492" y="58" width="25" height="24" fill="url(#dith)"/><rect x="492" y="58" width="25" height="1" fill="#a0a0a0"/><rect x="492" y="58" width="1" height="24" fill="#a0a0a0"/><rect x="492" y="81" width="25" height="1" fill="#fff"/><rect x="516" y="58" width="1" height="24" fill="#fff"/><path d="M499 66l4 4.5-4 4.5M505 66l4 4.5-4 4.5" fill="none" stroke="#0000e0" stroke-width="2.2" /><path d="M521.5 63.5h3v3h-3z" fill="none" stroke="#00007c" stroke-width="1" /><rect x="526" y="65" width="2" height="1" fill="#00007c"/><path d="M521.5 67.5h3v3h-3z" fill="none" stroke="#00007c" stroke-width="1" /><rect x="526" y="69" width="2" height="1" fill="#00007c"/><path d="M521.5 71.5h3v3h-3z" fill="none" stroke="#00007c" stroke-width="1" /><rect x="526" y="73" width="2" height="1" fill="#00007c"/><path d="M521.5 75.5h3v3h-3z" fill="none" stroke="#00007c" stroke-width="1" /><rect x="526" y="77" width="2" height="1" fill="#00007c"/><rect x="529" y="63" width="1" height="15" fill="#a0a0a0"/><path d="M531.5 63.5h3v3h-3zM534.5 67.5h3v3h-3zM531.5 74.5h3v3h-3z" fill="none" stroke="#00007c" stroke-width="1" /><rect x="535" y="64" width="2" height="1" fill="#00007c"/><path d="M532.5 66.5v8M532.5 69.5h2M535.5 70.5v3h1" fill="none" stroke="#00007c" stroke-width="1" /><rect x="548" y="59" width="1" height="22" fill="#a0a0a0"/><rect x="549" y="59" width="1" height="22" fill="#ffffff"/><rect x="559" y="63" width="4" height="14" fill="#ff0000"/><rect x="559" y="66" width="14" height="2" fill="#0000ff"/><rect x="559" y="70" width="14" height="2" fill="#0000ff"/><rect x="559" y="74" width="14" height="2" fill="#0000ff"/><rect x="565" y="62" width="2" height="16" fill="#000"/><path d="M581 69h5l-2.5 3z" fill="#000" stroke="none" stroke-width="1" /><rect x="588" y="58" width="25" height="24" fill="url(#dith)"/><rect x="613" y="58" width="9" height="24" fill="url(#dith)"/><rect x="588" y="58" width="25" height="1" fill="#a0a0a0"/><rect x="588" y="58" width="1" height="24" fill="#a0a0a0"/><rect x="588" y="81" width="25" height="1" fill="#fff"/><rect x="612" y="58" width="1" height="24" fill="#fff"/><rect x="613" y="58" width="9" height="1" fill="#a0a0a0"/><rect x="613" y="58" width="1" height="24" fill="#a0a0a0"/><rect x="613" y="81" width="9" height="1" fill="#fff"/><rect x="621" y="58" width="1" height="24" fill="#fff"/><rect x="594" y="66" width="5" height="1" fill="#000"/><rect x="594" y="68" width="5" height="1" fill="#000"/><rect x="594" y="70" width="5" height="1" fill="#000"/><rect x="594" y="72" width="5" height="1" fill="#000"/><rect x="594" y="74" width="5" height="1" fill="#000"/><rect x="594" y="76" width="5" height="1" fill="#000"/><path d="M607 65l-5 6h4l-5 6" fill="none" stroke="#000" stroke-width="2.2" /><path d="M607 65l-5 6h4l-5 6" fill="none" stroke="#ffff00" stroke-width="0.9" /><path d="M615 69h5l-2.5 3z" fill="#000" stroke="none" stroke-width="1" /><rect x="628" y="59" width="1" height="22" fill="#a0a0a0"/><rect x="629" y="59" width="1" height="22" fill="#ffffff"/><rect x="640" y="64" width="13" height="2" fill="#000"/><path d="M641.5 66.5h10v6h-10z" fill="#fff" stroke="#000" stroke-width="1" /><rect x="643" y="68" width="6" height="1" fill="#000"/><rect x="643" y="70" width="6" height="1" fill="#000"/><rect x="646" y="73" width="2" height="3" fill="#000"/><rect x="643" y="76" width="8" height="1" fill="#000"/><path d="M661 69h5l-2.5 3z" fill="#000" stroke="none" stroke-width="1" /><path d="M922 76h6l-3 3z" fill="#a0a0a0" stroke="none" stroke-width="1" /></svg>
<!--/TB-->
<!-- tree -->
<div id="tree">
<svg class="a" style="left:0;top:0" width="150" height="280" shape-rendering="crispEdges">
<rect x="22" y="140" width="1" height="1" fill="#a0a0a0"/>
<rect x="22" y="142" width="1" height="1" fill="#a0a0a0"/>
<rect x="22" y="144" width="1" height="1" fill="#a0a0a0"/>
<rect x="22" y="146" width="1" height="1" fill="#a0a0a0"/>
<rect x="22" y="148" width="1" height="1" fill="#a0a0a0"/>
<rect x="22" y="150" width="1" height="1" fill="#a0a0a0"/>
<rect x="22" y="152" width="1" height="1" fill="#a0a0a0"/>
<rect x="22" y="154" width="1" height="1" fill="#a0a0a0"/>
<rect x="22" y="156" width="1" height="1" fill="#a0a0a0"/>
<rect x="22" y="158" width="1" height="1" fill="#a0a0a0"/>
<rect x="22" y="160" width="1" height="1" fill="#a0a0a0"/>
<rect x="22" y="162" width="1" height="1" fill="#a0a0a0"/>
<rect x="22" y="164" width="1" height="1" fill="#a0a0a0"/>
<rect x="22" y="166" width="1" height="1" fill="#a0a0a0"/>
<rect x="22" y="168" width="1" height="1" fill="#a0a0a0"/>
<rect x="22" y="170" width="1" height="1" fill="#a0a0a0"/>
<rect x="22" y="172" width="1" height="1" fill="#a0a0a0"/>
<rect x="22" y="174" width="1" height="1" fill="#a0a0a0"/>
<rect x="22" y="176" width="1" height="1" fill="#a0a0a0"/>
<rect x="22" y="178" width="1" height="1" fill="#a0a0a0"/>
<rect x="22" y="180" width="1" height="1" fill="#a0a0a0"/>
<rect x="22" y="182" width="1" height="1" fill="#a0a0a0"/>
<rect x="22" y="184" width="1" height="1" fill="#a0a0a0"/>
<rect x="22" y="186" width="1" height="1" fill="#a0a0a0"/>
<rect x="22" y="188" width="1" height="1" fill="#a0a0a0"/>
<rect x="22" y="190" width="1" height="1" fill="#a0a0a0"/>
<rect x="22" y="192" width="1" height="1" fill="#a0a0a0"/>
<rect x="22" y="194" width="1" height="1" fill="#a0a0a0"/>
<rect x="22" y="196" width="1" height="1" fill="#a0a0a0"/>
<rect x="22" y="198" width="1" height="1" fill="#a0a0a0"/>
<rect x="22" y="200" width="1" height="1" fill="#a0a0a0"/>
<rect x="22" y="202" width="1" height="1" fill="#a0a0a0"/>
<rect x="22" y="204" width="1" height="1" fill="#a0a0a0"/>
<rect x="22" y="206" width="1" height="1" fill="#a0a0a0"/>
<rect x="22" y="208" width="1" height="1" fill="#a0a0a0"/>
<rect x="22" y="210" width="1" height="1" fill="#a0a0a0"/>
<rect x="22" y="212" width="1" height="1" fill="#a0a0a0"/>
<rect x="22" y="214" width="1" height="1" fill="#a0a0a0"/>
<rect x="22" y="216" width="1" height="1" fill="#a0a0a0"/>
<rect x="22" y="218" width="1" height="1" fill="#a0a0a0"/>
<rect x="22" y="220" width="1" height="1" fill="#a0a0a0"/>
<rect x="22" y="222" width="1" height="1" fill="#a0a0a0"/>
<rect x="22" y="224" width="1" height="1" fill="#a0a0a0"/>
<rect x="22" y="226" width="1" height="1" fill="#a0a0a0"/>
<rect x="22" y="228" width="1" height="1" fill="#a0a0a0"/>
<rect x="22" y="230" width="1" height="1" fill="#a0a0a0"/>
<rect x="22" y="232" width="1" height="1" fill="#a0a0a0"/>
<rect x="22" y="234" width="1" height="1" fill="#a0a0a0"/>
<rect x="22" y="236" width="1" height="1" fill="#a0a0a0"/>
<rect x="22" y="238" width="1" height="1" fill="#a0a0a0"/>
<rect x="22" y="240" width="1" height="1" fill="#a0a0a0"/>
<rect x="39" y="140" width="1" height="1" fill="#a0a0a0"/>
<rect x="39" y="142" width="1" height="1" fill="#a0a0a0"/>
<rect x="39" y="144" width="1" height="1" fill="#a0a0a0"/>
<rect x="39" y="146" width="1" height="1" fill="#a0a0a0"/>
<rect x="39" y="148" width="1" height="1" fill="#a0a0a0"/>
<rect x="39" y="150" width="1" height="1" fill="#a0a0a0"/>
<rect x="39" y="152" width="1" height="1" fill="#a0a0a0"/>
<rect x="39" y="154" width="1" height="1" fill="#a0a0a0"/>
<rect x="39" y="156" width="1" height="1" fill="#a0a0a0"/>
<rect x="39" y="158" width="1" height="1" fill="#a0a0a0"/>
<rect x="39" y="160" width="1" height="1" fill="#a0a0a0"/>
<rect x="39" y="162" width="1" height="1" fill="#a0a0a0"/>
<rect x="39" y="164" width="1" height="1" fill="#a0a0a0"/>
<rect x="39" y="166" width="1" height="1" fill="#a0a0a0"/>
<rect x="39" y="168" width="1" height="1" fill="#a0a0a0"/>
<rect x="39" y="170" width="1" height="1" fill="#a0a0a0"/>
<rect x="39" y="172" width="1" height="1" fill="#a0a0a0"/>
<rect x="39" y="174" width="1" height="1" fill="#a0a0a0"/>
<rect x="39" y="176" width="1" height="1" fill="#a0a0a0"/>
<rect x="39" y="178" width="1" height="1" fill="#a0a0a0"/>
<rect x="39" y="180" width="1" height="1" fill="#a0a0a0"/>
<rect x="39" y="182" width="1" height="1" fill="#a0a0a0"/>
<rect x="39" y="184" width="1" height="1" fill="#a0a0a0"/>
<rect x="39" y="186" width="1" height="1" fill="#a0a0a0"/>
<rect x="39" y="188" width="1" height="1" fill="#a0a0a0"/>
<rect x="39" y="190" width="1" height="1" fill="#a0a0a0"/>
<rect x="39" y="192" width="1" height="1" fill="#a0a0a0"/>
<rect x="39" y="194" width="1" height="1" fill="#a0a0a0"/>
<rect x="39" y="196" width="1" height="1" fill="#a0a0a0"/>
<rect x="39" y="198" width="1" height="1" fill="#a0a0a0"/>
<rect x="39" y="200" width="1" height="1" fill="#a0a0a0"/>
<rect x="39" y="202" width="1" height="1" fill="#a0a0a0"/>
<rect x="39" y="204" width="1" height="1" fill="#a0a0a0"/>
<rect x="39" y="206" width="1" height="1" fill="#a0a0a0"/>
<rect x="39" y="208" width="1" height="1" fill="#a0a0a0"/>
<rect x="18.5" y="130.5" width="8" height="8" fill="#fff" stroke="#808080"/>
<rect x="20" y="134" width="5" height="1" fill="#000"/>
<rect x="28" y="134" width="1" height="1" fill="#a0a0a0"/>
<rect x="30" y="134" width="1" height="1" fill="#a0a0a0"/>
<rect x="32" y="134" width="1" height="1" fill="#a0a0a0"/>
<rect x="35.5" y="146.5" width="8" height="8" fill="#fff" stroke="#808080"/>
<rect x="37" y="150" width="5" height="1" fill="#000"/>
<rect x="45" y="150" width="1" height="1" fill="#a0a0a0"/>
<rect x="47" y="150" width="1" height="1" fill="#a0a0a0"/>
<rect x="49" y="150" width="1" height="1" fill="#a0a0a0"/>
<rect x="56" y="158" width="1" height="1" fill="#a0a0a0"/>
<rect x="56" y="160" width="1" height="1" fill="#a0a0a0"/>
<rect x="56" y="162" width="1" height="1" fill="#a0a0a0"/>
<rect x="56" y="164" width="1" height="1" fill="#a0a0a0"/>
<rect x="56" y="166" width="1" height="1" fill="#a0a0a0"/>
<rect x="58" y="166" width="1" height="1" fill="#a0a0a0"/>
<rect x="60" y="166" width="1" height="1" fill="#a0a0a0"/>
<rect x="62" y="166" width="1" height="1" fill="#a0a0a0"/>
<rect x="64" y="166" width="1" height="1" fill="#a0a0a0"/>
<rect x="35.5" y="178.5" width="8" height="8" fill="#fff" stroke="#808080"/>
<rect x="37" y="182" width="5" height="1" fill="#000"/>
<rect x="45" y="182" width="1" height="1" fill="#a0a0a0"/>
<rect x="47" y="182" width="1" height="1" fill="#a0a0a0"/>
<rect x="49" y="182" width="1" height="1" fill="#a0a0a0"/>
<rect x="56" y="190" width="1" height="1" fill="#a0a0a0"/>
<rect x="56" y="192" width="1" height="1" fill="#a0a0a0"/>
<rect x="56" y="194" width="1" height="1" fill="#a0a0a0"/>
<rect x="56" y="196" width="1" height="1" fill="#a0a0a0"/>
<rect x="56" y="198" width="1" height="1" fill="#a0a0a0"/>
<rect x="58" y="198" width="1" height="1" fill="#a0a0a0"/>
<rect x="60" y="198" width="1" height="1" fill="#a0a0a0"/>
<rect x="62" y="198" width="1" height="1" fill="#a0a0a0"/>
<rect x="64" y="198" width="1" height="1" fill="#a0a0a0"/>
<rect x="35.5" y="210.5" width="8" height="8" fill="#fff" stroke="#808080"/>
<rect x="37" y="214" width="5" height="1" fill="#000"/>
<rect x="45" y="214" width="1" height="1" fill="#a0a0a0"/>
<rect x="47" y="214" width="1" height="1" fill="#a0a0a0"/>
<rect x="49" y="214" width="1" height="1" fill="#a0a0a0"/>
<rect x="56" y="222" width="1" height="1" fill="#a0a0a0"/>
<rect x="56" y="224" width="1" height="1" fill="#a0a0a0"/>
<rect x="56" y="226" width="1" height="1" fill="#a0a0a0"/>
<rect x="56" y="228" width="1" height="1" fill="#a0a0a0"/>
<rect x="56" y="230" width="1" height="1" fill="#a0a0a0"/>
<rect x="58" y="230" width="1" height="1" fill="#a0a0a0"/>
<rect x="60" y="230" width="1" height="1" fill="#a0a0a0"/>
<rect x="62" y="230" width="1" height="1" fill="#a0a0a0"/>
<rect x="64" y="230" width="1" height="1" fill="#a0a0a0"/>
<rect x="18.5" y="242.5" width="8" height="8" fill="#fff" stroke="#808080"/>
<rect x="20" y="246" width="5" height="1" fill="#000"/>
<rect x="28" y="246" width="1" height="1" fill="#a0a0a0"/>
<rect x="30" y="246" width="1" height="1" fill="#a0a0a0"/>
<rect x="32" y="246" width="1" height="1" fill="#a0a0a0"/>
<rect x="39" y="254" width="1" height="1" fill="#a0a0a0"/>
<rect x="39" y="256" width="1" height="1" fill="#a0a0a0"/>
<rect x="39" y="258" width="1" height="1" fill="#a0a0a0"/>
<rect x="39" y="260" width="1" height="1" fill="#a0a0a0"/>
<rect x="39" y="262" width="1" height="1" fill="#a0a0a0"/>
<rect x="41" y="262" width="1" height="1" fill="#a0a0a0"/>
<rect x="43" y="262" width="1" height="1" fill="#a0a0a0"/>
<rect x="45" y="262" width="1" height="1" fill="#a0a0a0"/>
<rect x="47" y="262" width="1" height="1" fill="#a0a0a0"/>
</svg>
<div class="t ms" style="left:33px;top:129px">PROJECTS</div>
<div class="a" style="left:48px;top:142px;width:39px;height:16px;background:#6b6b6b"></div>
<div class="t ms" style="left:50px;top:145px;color:#fff;font-size:11px"><span style="text-decoration:underline;text-underline-offset:1px">ALPHA</span></div>
<div class="t ms" style="left:66px;top:161px">Validation</div>
<div class="t ms" style="left:50px;top:177px">BETA</div>
<div class="t ms" style="left:66px;top:193px">Validation</div>
<div class="t ms" style="left:50px;top:209px">GAMMA</div>
<div class="t ms" style="left:66px;top:225px">Validation</div>
<div class="t ms" style="left:33px;top:241px">TEAM MANAGEMENT</div>
<div class="t ms" style="left:50px;top:257px">Trainings</div>
<div class="a" style="left:107px;top:102px;width:18px;height:16px;border:1px solid;border-color:#fff #a0a0a0 #a0a0a0 #fff"></div>
<svg class="a" style="left:107px;top:102px" width="18" height="16"><path d="M5.5 10 C5.2 7 7 5.2 9.8 5.2" stroke="#a0a0a0" stroke-width="1.7" fill="none"/><path d="M9.5 2.5 L12.8 5.2 L9.5 8 Z" fill="#a0a0a0"/><path d="M12.5 6.5 C12.8 9.5 11 11.6 8.2 11.6" stroke="#a0a0a0" stroke-width="1.7" fill="none"/><path d="M8.5 8.8 L5.2 11.6 L8.5 14.4 Z" fill="#a0a0a0"/></svg>
<div class="a" style="left:129px;top:102px;width:18px;height:16px;border:1px solid;border-color:#fff #a0a0a0 #a0a0a0 #fff"></div>
<svg class="a" style="left:129px;top:102px" width="18" height="16"><path d="M5.2 4.3 L12.8 11.2 M12.8 4.3 L5.2 11.2" stroke="#000" stroke-width="1.9"/></svg>
</div>
</body></html>
